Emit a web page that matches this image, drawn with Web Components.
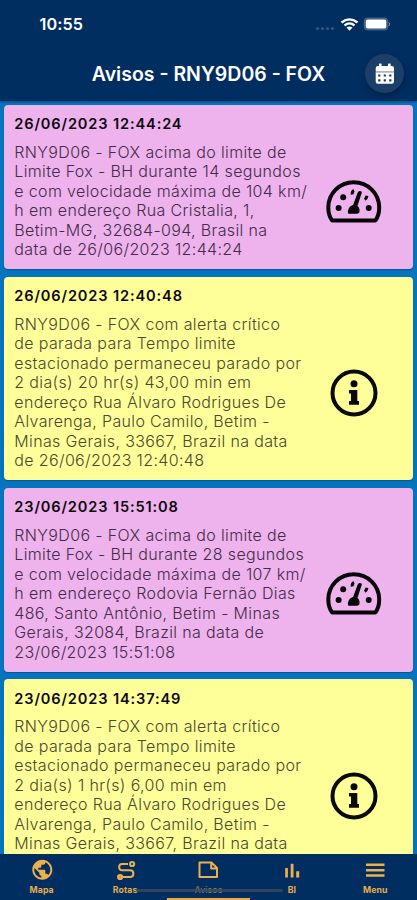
<!DOCTYPE html>
<html lang="pt-BR">
<head>
<meta charset="utf-8">
<title>Avisos</title>
<style>
html,body{margin:0;height:100%;overflow:hidden}
body{font-family:Inter,"Liberation Sans",sans-serif;background:#0474bd}
</style>
</head>
<body>
<avisos-app></avisos-app>
<script>
const make = (name, html, setup) => customElements.define(name, class extends HTMLElement {
  constructor() {
    super();
    this.attachShadow({mode: 'open'});
  }
  connectedCallback() {
    this.shadowRoot.innerHTML = html;
    if (setup) setup(this, this.shadowRoot);
  }
});

const gauge = `<svg width="56" height="44" viewBox="0 0 56 44"><path d="M6.200 40.500C3.400 37 2.300 32.800 2.300 27.500C2.300 13.500 13.500 2.300 27.700 2.300S53.200 13.500 53.200 27.500C53.200 32.800 52.100 37 49.300 40.500Z" fill="none" stroke="#080508" stroke-width="4" stroke-linejoin="round"/><g fill="#080508"><circle cx="17.200" cy="17.200" r="3"/><circle cx="12.600" cy="28.100" r="3"/><circle cx="42.700" cy="28.100" r="3"/><path d="M22.200 33.700Q20.500 27.500 27.200 24.700L31.700 12.500Q33.500 9.800 36 12L31.500 25.800Q34.300 28.500 33.300 32.500L31.700 33.700Z"/></g><path d="M28 10.300Q25.900 11.300 26.200 14.500M41 15.800Q40.500 18.500 38.700 19.500" fill="none" stroke="#080508" stroke-width="3"/></svg>`;
const info = `<svg width="48" height="48" viewBox="0 0 48 48"><circle cx="24" cy="24" r="21.500" fill="none" stroke="#090905" stroke-width="4"/><g fill="#090905"><circle cx="24" cy="14.800" r="3.500"/><path d="M19 20.900H27.300V32.100H29V35.700H19V32.100H21V24.500H19Z"/></g></svg>`;

make('status-bar', `<style>
:host{display:flex;height:48px;box-sizing:border-box;padding:0 27px 0 39.500px;align-items:center;color:#fff}
time{font-size:16.200px;font-weight:600;flex:1;letter-spacing:.1px}
svg{display:block}
</style><time>10:55</time>
<svg width="76" height="16" viewBox="0 0 76 16"><g fill="#365578"><circle cx="3.500" cy="12.500" r="1.600"/><circle cx="8.500" cy="12.500" r="1.600"/><circle cx="13.500" cy="12.500" r="1.600"/><circle cx="18.500" cy="12.500" r="1.600"/></g><g fill="none" stroke="#fff" stroke-width="2.300"><path d="M27.500 6.500Q35.500 .2 43.500 6.500"/><path d="M30.500 9.500Q35.500 5.300 40.500 9.500"/></g><path d="M32.500 11.500Q35.500 9.300 38.500 11.500L35.500 14.800Z" fill="#fff"/><rect x="50.200" y="2" width="23.600" height="12" rx="3.300" fill="#365578" stroke="#55718f" stroke-width=".8"/><rect x="51.800" y="3.600" width="20.500" height="8.900" rx="1.800" fill="#fff"/><path d="M75 6.500q1.200 1.700 0 3.500" stroke="#8397ac" fill="none"/></svg>`);

make('title-bar', `<style>
:host{display:grid;grid-template-columns:52px 1fr 52px;height:52px;align-items:center;color:#fff;padding-bottom:1px;box-sizing:border-box}
h1{margin:0;font-size:19.500px;font-weight:600;text-align:center;white-space:nowrap}
button{width:39px;height:39px;border:0;border-radius:50%;padding:0;background:#1b3f68;display:grid;place-items:center;box-shadow:1px 3px 6px #00204c}
</style><span></span><h1><slot></slot></h1>
<button aria-label="Calendário"><svg width="20" height="22" viewBox="0 0 20 22"><path d="M.7 8V5.200Q.7 3 2.900 3H4V1.100Q4 .5 4.700.5H6Q6.600.5 6.600 1.200V3H13V1.200Q13 .5 13.700.5H15Q15.700.5 15.700 1.200V3H17Q19 3 19 5V8Z" fill="#fff"/><path d="M.7 9.200H19V18.500Q19 20.800 16.800 20.800H2.900Q.7 20.800.7 18.500Z" fill="#fff"/><path d="M.7 8h18.300v1.300H.7Z" fill="#a7b5c5"/><path d="M3.200 11.400h2.200v2.200H3.200zM8.700 11.400h2.200v2.200H8.700zM14.200 11.400h2.200v2.200H14.200zM3.200 16.200h2.200v2.200H3.200zM8.700 16.200h2.200v2.200H8.700zM14.200 16.200h2.200v2.200H14.200z" fill="#173a62"/></svg></button>`);

make('alert-card', `<style>
:host{display:block;box-sizing:border-box;flex:none;border-radius:4px;padding:10.700px 0 9.700px 10.300px;box-shadow:0 1px 1px #0556a0;background:#eeb3ec;color:#432b49}
:host([kind=info]){background:#ffff99;color:#494830}
h2{margin:0;height:18px;line-height:18px;font-size:14.600px;font-weight:600;letter-spacing:.86px;color:#0c080d;white-space:nowrap}
.row{display:grid;grid-template-columns:280.700px 119px;align-items:center;margin-top:9.500px}
:host([clipped]) .row{height:155.600px}
:host([clipped]) p{align-self:start}
p{margin:0;font-size:16px;font-weight:300;line-height:19.450px;letter-spacing:.36px;white-space:nowrap}
p span{display:block}
.icon{display:grid;place-items:center;padding-top:1px}
svg{display:block}
</style><h2></h2><div class="row"><p></p><div class="icon"></div></div>`, (el, root) => {
  root.querySelector('h2').textContent = el.getAttribute('time');
  for (const line of el.textContent.trim().split('|')) {
    const s = document.createElement('span');
    s.textContent = line;
    root.querySelector('p').append(s);
  }
  root.querySelector('.icon').innerHTML = el.getAttribute('kind') === 'info' ? info : gauge;
});

make('nav-item', `<style>
:host{display:flex;flex-direction:column;align-items:center;color:#e9ac48;padding-top:3px;position:relative;height:44px;box-sizing:border-box}
svg{display:block;width:24px;height:24px;fill:#edb04b}
span{font-size:8.700px;line-height:12px;font-weight:700;margin-top:1px;letter-spacing:.1px}
:host([active]) span{color:#8d7752;font-weight:500}
:host([active])::after{content:"";position:absolute;bottom:0;left:0;right:0;height:2px;background:#e9ac48}
</style><svg viewBox="0 0 24 24"></svg><span><slot></slot></span>`, (el, root) => {
  const shapes = {
    globe: '<path transform="translate(.3 -1.300)" d="M12 2C6.480 2 2 6.480 2 12s4.480 10 10 10 10-4.480 10-10S17.520 2 12 2zm-1 17.930c-3.950-.49-7-3.850-7-7.930 0-.62.080-1.210.210-1.790L9 15v1c0 1.100.9 2 2 2v1.930zm6.900-2.540c-.26-.81-1-1.390-1.900-1.390h-1v-3c0-.55-.45-1-1-1H8v-2h2c.55 0 1-.45 1-1V7h2c1.100 0 2-.9 2-2v-.41c2.930 1.190 5 4.060 5 7.410 0 2.080-.8 3.970-2.100 5.390z"/>',
    route: '<g transform="translate(.5 0)" fill="none" stroke="#edb04b" stroke-width="2"><path d="M14.500 5H8.500C4.700 5 4.700 11.300 8.500 11.300H16.500C21 11.300 21 18 16.500 18H9"/><circle cx="18.600" cy="5" r="2.100"/><circle cx="6.600" cy="18" r="2.100" fill="#c5964f"/></g>',
    note: '<path fill="none" stroke="#edb04b" stroke-width="2" stroke-linejoin="round" d="M3.500 3.500H15.500L21 9V18H3.500ZM15.200 4V9.500H20.500"/>',
    bars: '<path d="M5.200 9h2.700v9.500H5.200zM10.700 4.800h2.800v13.700h-2.800zM16.200 12.300h3v6.200h-3z"/>',
    menu: '<path d="M3 4.500h18.500V7H3zM3 9.900h18.500v2.500H3zM3 15.300h18.500v2.500H3z"/>'
  };
  root.querySelector('svg').innerHTML = shapes[el.getAttribute('icon')];
});

make('bottom-nav', `<style>
:host{display:grid;grid-template-columns:repeat(5,83.400px);height:46px;background:#012e60;padding-top:2px;box-sizing:border-box;position:relative}
i{position:absolute;left:136px;width:147px;top:35px;height:3px;border-radius:2px;background:#404a59;opacity:.8}
</style><slot></slot><i></i>`);

make('avisos-app', `<style>
:host{display:flex;flex-direction:column;height:900px;width:417px;overflow:hidden}
header{background:#012e60;height:101px;flex:none;box-shadow:0 1px 2px #03477c;position:relative}
main{flex:1;min-height:0;overflow:hidden;display:flex;flex-direction:column;gap:7.500px;padding:3.500px 4px 0;background:#0474bd}
bottom-nav{flex:none}
</style>
<header><status-bar></status-bar><title-bar>Avisos - RNY9D06 - FOX</title-bar></header>
<main>
<alert-card kind="speed" time="26/06/2023 12:44:24">RNY9D06 - FOX acima do limite de|Limite Fox - BH durante 14 segundos|e com velocidade máxima de 104 km/|h em endereço Rua Cristalia, 1,|Betim-MG, 32684-094, Brasil na|data de 26/06/2023 12:44:24</alert-card>
<alert-card kind="info" time="26/06/2023 12:40:48">RNY9D06 - FOX com alerta crítico|de parada para Tempo limite|estacionado permaneceu parado por|2 dia(s) 20 hr(s) 43,00 min em|endereço Rua Álvaro Rodrigues De|Alvarenga, Paulo Camilo, Betim -|Minas Gerais, 33667, Brazil na data|de 26/06/2023 12:40:48</alert-card>
<alert-card kind="speed" time="23/06/2023 15:51:08">RNY9D06 - FOX acima do limite de|Limite Fox - BH durante 28 segundos|e com velocidade máxima de 107 km/|h em endereço Rodovia Fernão Dias|486, Santo Antônio, Betim - Minas|Gerais, 32084, Brazil na data de|23/06/2023 15:51:08</alert-card>
<alert-card kind="info" clipped time="23/06/2023 14:37:49">RNY9D06 - FOX com alerta crítico|de parada para Tempo limite|estacionado permaneceu parado por|2 dia(s) 1 hr(s) 6,00 min em|endereço Rua Álvaro Rodrigues De|Alvarenga, Paulo Camilo, Betim -|Minas Gerais, 33667, Brazil na data</alert-card>
</main>
<bottom-nav><nav-item icon="globe">Mapa</nav-item><nav-item icon="route">Rotas</nav-item><nav-item icon="note" active>Avisos</nav-item><nav-item icon="bars">BI</nav-item><nav-item icon="menu">Menu</nav-item></bottom-nav>`);
</script>
</body>
</html>
